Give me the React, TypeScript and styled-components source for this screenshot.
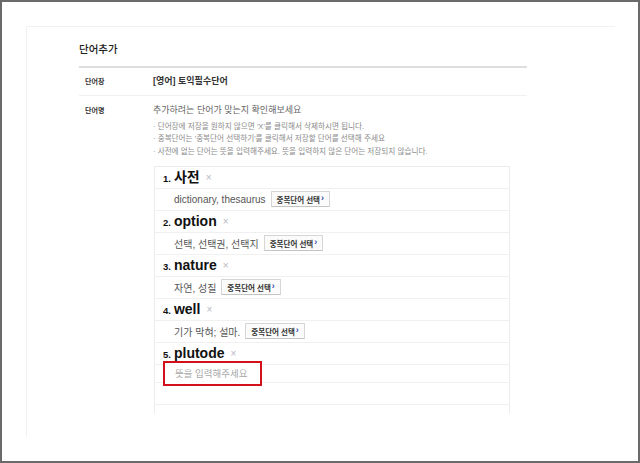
import React from "react";
import styled, { createGlobalStyle } from "styled-components";

const Global = createGlobalStyle`
  html, body { margin: 0; padding: 0; background: #fff; }
  body { font-family: "Liberation Sans", "Noto Sans CJK KR", sans-serif; }
  * { box-sizing: border-box; }
`;

const KR = `"Liberation Sans", "Noto Sans CJK KR", sans-serif`;

const Frame = styled.div`
  width: 640px;
  height: 463px;
  border: 2px solid #6a6a6a;
  padding: 24px 0 0 24px;
  background: #fff;
  overflow: hidden;
`;

const Panel = styled.div`
  width: 589px;
  height: 411px;
  border-top: 1px solid #f2f2f2;
  border-left: 1px solid #f2f2f2;
  padding: 12px 0 0 52px;
`;

const Title = styled.h2`
  margin: 0 0 7px 0;
  height: 20px;
  line-height: 20px;
  font-family: ${KR};
  font-size: 10.5px;
  font-weight: 500;
  color: #222;
`;

const Table = styled.div`
  width: 448px;
  border-top: 2px solid #dedede;
`;

const Row = styled.div<{ $line?: boolean; $h?: number }>`
  display: flex;
  ${(p) => (p.$h ? `height: ${p.$h}px;` : "")}
  border-bottom: ${(p) => (p.$line ? "1px solid #f1f1f1" : "none")};
  align-items: ${(p) => (p.$line ? "center" : "flex-start")};
`;

const Label = styled.div<{ $top?: number }>`
  width: 74px;
  padding-left: 6px;
  padding-top: ${(p) => p.$top ?? 0}px;
  font-family: ${KR};
  font-size: 7px;
  font-weight: 700;
  line-height: 13px;
  color: #333;
  flex-shrink: 0;
`;

const Value = styled.div`
  font-family: ${KR};
  font-size: 9px;
  font-weight: 700;
  color: #333;
  line-height: 13px;
`;

const Content = styled.div`
  padding-top: 8px;
  flex: 1;
`;

const Lead = styled.div`
  font-family: ${KR};
  font-size: 9px;
  line-height: 13px;
  color: #666;
`;

const Notes = styled.ul`
  margin: 4px 0 0 0;
  padding: 0;
  list-style: none;
`;

const Note = styled.li`
  font-family: ${KR};
  font-size: 7.6px;
  line-height: 12.3px;
  color: #8a8a8a;
  &::before { content: "· "; }
`;

const WordBox = styled.div`
  margin-top: 8px;
  width: 356px;
  margin-left: 1px;
  border: 1px solid #ececec;
  border-bottom: none;
  padding-bottom: 8px;
`;

const WordRow = styled.div<{ $indent?: boolean }>`
  height: 22px;
  border-bottom: 1px solid #f0f0f0;
  display: flex;
  align-items: center;
  padding-left: ${(p) => (p.$indent ? 19 : 8)}px;
`;

const Num = styled.span`
  font-family: "Liberation Sans", sans-serif;
  font-weight: 700;
  font-size: 9.5px;
  color: #111;
  margin-right: 3px;
  padding-top: 2px;
`;

const Word = styled.span`
  font-family: ${KR};
  font-weight: 700;
  font-size: 14px;
  color: #111;
  line-height: 20px;
`;

const Remove = styled.span`
  font-family: "Liberation Sans", sans-serif;
  font-size: 10px;
  color: #b8b8c4;
  margin-left: 6px;
`;

const Meaning = styled.span`
  font-family: ${KR};
  font-size: 10px;
  color: #555;
`;

const DupButton = styled.button`
  margin-left: 5px;
  height: 16px;
  padding: 0 5px;
  border: 1px solid #d6d6d6;
  border-bottom-color: #c4c4c4;
  background: #fbfbfb;
  border-radius: 1px;
  font-family: ${KR};
  font-size: 7.5px;
  font-weight: 700;
  color: #333;
  display: inline-flex;
  align-items: center;
  gap: 1px;
  cursor: pointer;
`;

const Arrow = styled.span`
  color: #3a4db0;
  font-family: "Liberation Sans", sans-serif;
  font-weight: 700;
  font-size: 9px;
  line-height: 1;
  margin-top: -1px;
`;

const InputRow = styled.div`
  height: 22px;
  border-bottom: 1px solid #f0f0f0;
  padding-left: 8px;
`;

const MeaningInput = styled.input`
  display: block;
  margin-top: -4px;
  width: 99px;
  height: 25px;
  border: 2px solid #d3111b;
  padding: 0 0 0 10px;
  font-family: ${KR};
  font-size: 9.5px;
  color: #333;
  background: #fff;
  outline: none;
  &::placeholder { color: #a8a8a8; }
`;

const words = [
  { n: 1, w: "사전", m: "dictionary, thesaurus" },
  { n: 2, w: "option", m: "선택, 선택권, 선택지" },
  { n: 3, w: "nature", m: "자연, 성질" },
  { n: 4, w: "well", m: "기가 막혀; 설마." },
];

export default function App() {
  return (
    <>
      <Global />
      <Frame>
        <Panel>
          <Title>단어추가</Title>
          <Table>
            <Row $line $h={28}>
              <Label>단어장</Label>
              <Value>[영어] 토익필수단어</Value>
            </Row>
            <Row>
              <Label $top={8}>단어명</Label>
              <Content>
                <Lead>추가하려는 단어가 맞는지 확인해보세요</Lead>
                <Notes>
                  <Note>단어장에 저장을 원하지 않으면 'X'를 클릭해서 삭제하시면 됩니다.</Note>
                  <Note>중복단어는 '중복단어 선택하기'를 클릭해서 저장할 단어를 선택해 주세요</Note>
                  <Note>사전에 없는 단어는 뜻을 입력해주세요. 뜻을 입력하지 않은 단어는 저장되지 않습니다.</Note>
                </Notes>
                <WordBox>
                  {words.map((x) => (
                    <React.Fragment key={x.n}>
                      <WordRow>
                        <Num>{x.n}.</Num>
                        <Word>{x.w}</Word>
                        <Remove>×</Remove>
                      </WordRow>
                      <WordRow $indent>
                        <Meaning>{x.m}</Meaning>
                        <DupButton type="button">
                          중복단어 선택<Arrow>›</Arrow>
                        </DupButton>
                      </WordRow>
                    </React.Fragment>
                  ))}
                  <WordRow>
                    <Num>5.</Num>
                    <Word>plutode</Word>
                    <Remove>×</Remove>
                  </WordRow>
                  <InputRow>
                    <MeaningInput placeholder="뜻을 입력해주세요" />
                  </InputRow>
                  <WordRow />
                </WordBox>
              </Content>
            </Row>
          </Table>
        </Panel>
      </Frame>
    </>
  );
}
